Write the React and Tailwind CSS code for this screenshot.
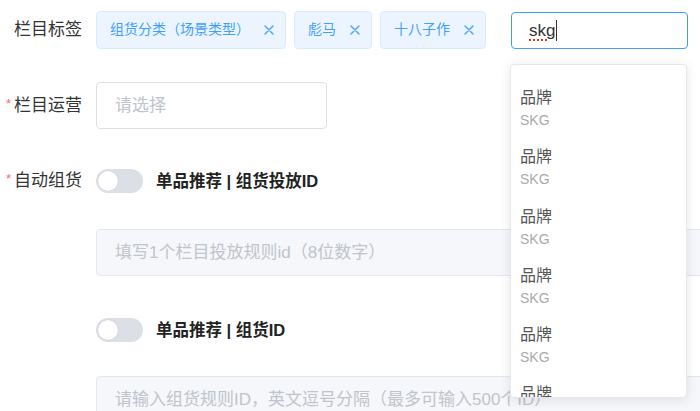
import React from "react";

const FONT = { fontFamily: '"Liberation Sans", "Noto Sans CJK SC", sans-serif' };

function CloseIcon() {
  return (
    <svg width="10" height="10" viewBox="0 0 10 10" className="shrink-0">
      <path d="M1 1 L9 9 M9 1 L1 9" stroke="#409eff" strokeWidth="1.3" strokeLinecap="round" />
    </svg>
  );
}

function Tag({ children }) {
  return (
    <div className="flex items-center h-[38px] pl-[13px] pr-[11px] gap-[14px] bg-[#ecf5ff] border border-[#d9ecff] rounded-[4px] text-[14px] text-[#409eff]">
      <span>{children}</span>
      <CloseIcon />
    </div>
  );
}

function Label({ required, children }) {
  return (
    <div className="w-[96px] shrink-0 flex items-center justify-end pr-[14px] text-[17px] text-[#333]">
      {required && <span className="text-[#f56c6c] text-[13px] mr-[3px] mt-[-4px]">*</span>}
      <span>{children}</span>
    </div>
  );
}

function Switch() {
  return (
    <div className="relative w-[47px] h-[24px] rounded-full bg-[#dcdfe6] shrink-0">
      <div className="absolute left-[2px] top-[2px] w-[20px] h-[20px] rounded-full bg-white shadow-[0_0_1px_rgba(0,0,0,0.2)]" />
    </div>
  );
}

function Item() {
  return (
    <div className="h-[59.3px] pt-[8px] px-[9px] shrink-0">
      <div className="h-[22px] leading-[22px] text-[16px] text-[#555]">品牌</div>
      <div className="h-[22px] leading-[22px] text-[14px] text-[#aaa]">SKG</div>
    </div>
  );
}

export default function App() {
  return (
    <div className="relative w-[700px] h-[411px] overflow-hidden bg-white" style={FONT}>
      <div className="pt-[10px]">
        {/* Row 1 */}
        <div className="flex items-center h-[39px]">
          <Label>栏目标签</Label>
          <div className="flex items-center gap-[8px]">
            <Tag>组货分类（场景类型）</Tag>
            <Tag>彪马</Tag>
            <Tag>十八子作</Tag>
          </div>
          <div className="ml-[25px] w-[177px] h-[37px] mt-[2px] border border-[#409eff] rounded-[4px] flex items-center pl-[17px] text-[17px] text-[#333]">
            <span className="underline decoration-dotted decoration-[#e5332a] decoration-2 underline-offset-[4px]">skg</span>
            <span className="w-[1px] h-[21px] bg-[#333] ml-[1px]" />
          </div>
        </div>

        {/* Row 2 */}
        <div className="flex items-center h-[47px] mt-[33px]">
          <Label required>栏目运营</Label>
          <div className="w-[231px] h-[47px] border border-[#dcdfe6] rounded-[4px] flex items-center pl-[18px] text-[17px] text-[#c0c4cc]">
            请选择
          </div>
        </div>

        {/* Row 3 */}
        <div className="flex items-center h-[48px] mt-[28px]">
          <Label required>自动组货</Label>
          <Switch />
          <span className="ml-[13px] text-[16.5px] font-semibold text-[#222]">单品推荐 | 组货投放ID</span>
        </div>

        {/* Row 4 */}
        <div className="flex items-center h-[47px] mt-[24px]">
          <div className="w-[96px] shrink-0" />
          <div className="w-[640px] shrink-0 h-[47px] bg-[#f5f7fa] border border-[#e4e7ed] rounded-[4px] flex items-center pl-[18px] text-[17px] text-[#c0c4cc]">
            填写1个栏目投放规则id（8位数字）
          </div>
        </div>

        {/* Row 5 */}
        <div className="flex items-center h-[48px] mt-[30px]">
          <div className="w-[96px] shrink-0" />
          <Switch />
          <span className="ml-[13px] text-[16.5px] font-semibold text-[#222]">单品推荐 | 组货ID</span>
        </div>

        {/* Row 6 */}
        <div className="flex items-center h-[47px] mt-[22px]">
          <div className="w-[96px] shrink-0" />
          <div className="w-[640px] shrink-0 h-[47px] bg-[#f5f7fa] border border-[#e4e7ed] rounded-[4px] flex items-center pl-[18px] text-[17px] text-[#c0c4cc]">
            请输入组货规则ID，英文逗号分隔（最多可输入500个ID）
          </div>
        </div>
      </div>

      {/* Dropdown */}
      <div className="absolute left-[510px] top-[64px] w-[177px] h-[334px] bg-white border border-[#e4e7ed] rounded-[4px] shadow-[0_2px_12px_rgba(0,0,0,0.1)] overflow-hidden flex flex-col pt-[14px]">
        <Item />
        <Item />
        <Item />
        <Item />
        <Item />
        <Item />
      </div>
    </div>
  );
}
